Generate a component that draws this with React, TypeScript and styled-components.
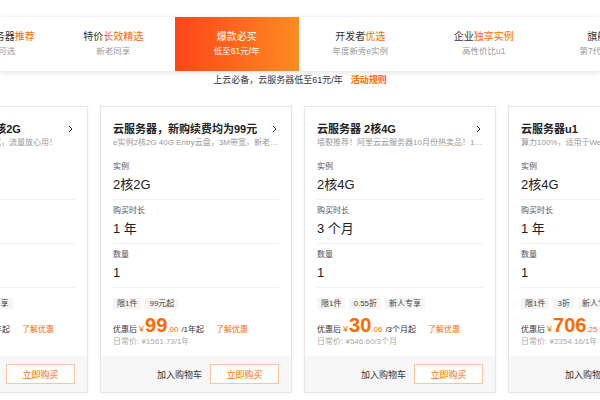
import React from 'react'
import styled, { createGlobalStyle } from 'styled-components'

const GlobalStyle = createGlobalStyle`
  body {
    margin: 0;
    background: #fff;
    font-family: 'Liberation Sans', 'Noto Sans CJK SC', sans-serif;
    color: #333;
    overflow: hidden;
  }
`

const ORANGE = '#ff6a00'

interface ITab {
  title: string
  highlight?: string
  sub: string
  active?: boolean
}

const tabs: ITab[] = [
  { title: '轻量应用服务器', highlight: '推荐', sub: '多种配置可选' },
  { title: '特价', highlight: '长效精选', sub: '新老同享' },
  { title: '爆款必买', sub: '低至61元/年', active: true },
  { title: '开发者', highlight: '优选', sub: '年度新秀e实例' },
  { title: '企业', highlight: '独享实例', sub: '高性价比u1' },
  { title: '旗舰', highlight: '新品', sub: '第7代全新实例' },
]

interface IProduct {
  title: string
  desc: string
  spec: string
  duration: string
  tags: string[]
  price: string
  cents: string
  unit: string
  original: string
}

const products: IProduct[] = [
  {
    title: '轻量应用服务器 2核2G',
    desc: '适合建站，200M峰值带宽，流量放心用！',
    spec: '2核2G',
    duration: '1 年',
    tags: ['限1件', '1.2折', '新人专享'],
    price: '118',
    cents: '.00',
    unit: '/1年起',
    original: '日常价: ¥1103.40/1年',
  },
  {
    title: '云服务器，新购续费均为99元',
    desc: 'e实例2核2G 40G Entry云盘，3M带宽，新老同享续费同价',
    spec: '2核2G',
    duration: '1 年',
    tags: ['限1件', '99元起'],
    price: '99',
    cents: '.00',
    unit: '/1年起',
    original: '日常价: ¥1561.73/1年',
  },
  {
    title: '云服务器 2核4G',
    desc: '墙裂推荐！阿里云云服务器10月份热卖品！100%算力',
    spec: '2核4G',
    duration: '3 个月',
    tags: ['限1件', '0.55折', '新人专享'],
    price: '30',
    cents: '.06',
    unit: '/3个月起',
    original: '日常价: ¥546.60/3个月',
  },
  {
    title: '云服务器u1',
    desc: '算力100%，适用于Web应用及中小型数据库',
    spec: '2核4G',
    duration: '1 年',
    tags: ['限1件', '3折', '新人专享'],
    price: '706',
    cents: '.25',
    unit: '/1年起',
    original: '日常价: ¥2354.16/1年',
  },
]

const App: React.FC = () => {
  return (
    <Page>
      <GlobalStyle />
      <TabBar>
        <TabRow>
          {tabs.map((t) => (
            <Tab key={t.title + t.sub} $active={t.active}>
              <TabTitle>
                {t.title}
                {t.highlight && <Hl>{t.highlight}</Hl>}
              </TabTitle>
              <TabSub>{t.sub}</TabSub>
            </Tab>
          ))}
        </TabRow>
      </TabBar>
      <Notice>
        上云必备，云服务器低至61元/年<Rule>活动规则</Rule>
      </Notice>
      <CardRow>
        {products.map((p) => (
          <Card key={p.title}>
            <CardBody>
              <Head>
                <TitleLine>
                  <Title>{p.title}</Title>
                  <svg width='5' height='8' viewBox='0 0 5 8'>
                    <polyline points='1,1 4,4 1,7' fill='none' stroke='#333' strokeWidth='1' />
                  </svg>
                </TitleLine>
                <Desc>{p.desc}</Desc>
              </Head>
              <Section>
                <Label>实例</Label>
                <Value>{p.spec}</Value>
              </Section>
              <Section>
                <Label>购买时长</Label>
                <Value>{p.duration}</Value>
              </Section>
              <Section>
                <Label>数量</Label>
                <Value>1</Value>
              </Section>
              <Tags>
                {p.tags.map((t) => (
                  <Tag key={t}>{t}</Tag>
                ))}
              </Tags>
              <PriceRow>
                <Small>优惠后</Small>
                <Yen>¥</Yen>
                <Big>{p.price}</Big>
                <Cents>{p.cents}</Cents>
                <Unit>{p.unit}</Unit>
                <More>了解优惠</More>
              </PriceRow>
              <Original>{p.original}</Original>
            </CardBody>
            <Footer>
              <Cart>加入购物车</Cart>
              <Buy>立即购买</Buy>
            </Footer>
          </Card>
        ))}
      </CardRow>
    </Page>
  )
}

const Page = styled.div`
  width: 600px;
  height: 400px;
  overflow: hidden;
  padding-top: 17px;
  box-sizing: border-box;
`

const TabBar = styled.div`
  height: 54px;
  background: #fff;
  box-shadow: 0 2px 6px rgba(0, 0, 0, 0.1), 0 -1px 3px rgba(0, 0, 0, 0.04);
  overflow: hidden;
`

const TabRow = styled.div`
  display: flex;
  margin-left: -72px;
  height: 100%;
`

const Tab = styled.div<{ $active?: boolean }>`
  flex: 0 0 123.5px;
  min-width: 0;
  display: flex;
  flex-direction: column;
  align-items: center;
  justify-content: center;
  gap: 2px;
  white-space: nowrap;
  background: ${(p) => (p.$active ? 'linear-gradient(90deg, #ff4518, #ff8b22)' : 'transparent')};
  color: ${(p) => (p.$active ? '#fff' : '#333')};
  & > div:last-child {
    color: ${(p) => (p.$active ? '#fff' : '#999')};
  }
`

const TabTitle = styled.div`
  font-size: 10px;
  line-height: 12px;
`

const Hl = styled.span`
  color: ${ORANGE};
`

const TabSub = styled.div`
  font-size: 8.5px;
  line-height: 12px;
`

const Notice = styled.div`
  margin: 3px 0 20px;
  text-align: center;
  font-size: 9px;
  line-height: 12px;
  color: #333;
`

const Rule = styled.span`
  color: ${ORANGE};
  font-weight: bold;
  margin-left: 8px;
`

const CardRow = styled.div`
  display: flex;
  gap: 12px;
  margin-left: -104px;
`

const Card = styled.div`
  flex: 0 0 192px;
  width: 192px;
  min-width: 0;
  height: 287px;
  box-sizing: border-box;
  border: 1px solid #e6e6e6;
  box-shadow: 0 1px 4px rgba(0, 0, 0, 0.05);
  background: #fff;
  display: flex;
  flex-direction: column;
  overflow: hidden;
`

const CardBody = styled.div`
  flex: 1;
  padding: 15px 12px 0;
  min-width: 0;
`

const Head = styled.div`
  margin-bottom: 8px;
`

const TitleLine = styled.div`
  display: flex;
  align-items: center;
  justify-content: space-between;
  padding-right: 2px;
`

const Title = styled.div`
  font-size: 11px;
  line-height: 14px;
  font-weight: bold;
  color: #222;
  white-space: nowrap;
`

const Desc = styled.div`
  margin-top: 2px;
  font-size: 8px;
  line-height: 10px;
  color: #999;
  white-space: nowrap;
  overflow: hidden;
  text-overflow: ellipsis;
`

const Section = styled.div`
  padding: 6px 0 6px;
  border-bottom: 1px solid #f0f0f0;
`

const Label = styled.div`
  font-size: 8px;
  line-height: 10px;
  color: #555;
`

const Value = styled.div`
  margin-top: 5px;
  font-size: 13px;
  line-height: 16px;
  color: #222;
`

const Tags = styled.div`
  display: flex;
  gap: 4px;
  margin-top: 10px;
  white-space: nowrap;
`

const Tag = styled.span`
  background: #f5f5f5;
  color: #444;
  font-size: 8px;
  line-height: 11px;
  padding: 0 4px;
`

const PriceRow = styled.div`
  display: flex;
  align-items: baseline;
  height: 24px;
  margin-top: 4px;
  white-space: nowrap;
`

const Small = styled.span`
  font-size: 8px;
  color: #333;
`

const Yen = styled.span`
  font-size: 9px;
  color: ${ORANGE};
  margin-left: 2px;
`

const Big = styled.span`
  font-size: 20px;
  line-height: 24px;
  font-weight: bold;
  color: ${ORANGE};
  margin-left: 1px;
`

const Cents = styled.span`
  font-size: 8px;
  color: ${ORANGE};
`

const Unit = styled.span`
  font-size: 8px;
  color: #333;
  margin-left: 3px;
`

const More = styled.span`
  font-size: 8px;
  color: ${ORANGE};
  margin-left: 12px;
`

const Original = styled.div`
  font-size: 8px;
  line-height: 10px;
  color: #aaa;
  white-space: nowrap;
`

const Footer = styled.div`
  height: 36px;
  flex-shrink: 0;
  background: #f7f7f7;
  display: flex;
  align-items: center;
  justify-content: flex-end;
  gap: 8px;
  padding-right: 12px;
`

const Cart = styled.span`
  font-size: 9px;
  color: #333;
  white-space: nowrap;
`

const Buy = styled.div`
  width: 69px;
  height: 20px;
  box-sizing: border-box;
  border: 1px solid #ffc59c;
  background: #fff;
  color: ${ORANGE};
  font-size: 9px;
  display: flex;
  align-items: center;
  justify-content: center;
`

export default App
